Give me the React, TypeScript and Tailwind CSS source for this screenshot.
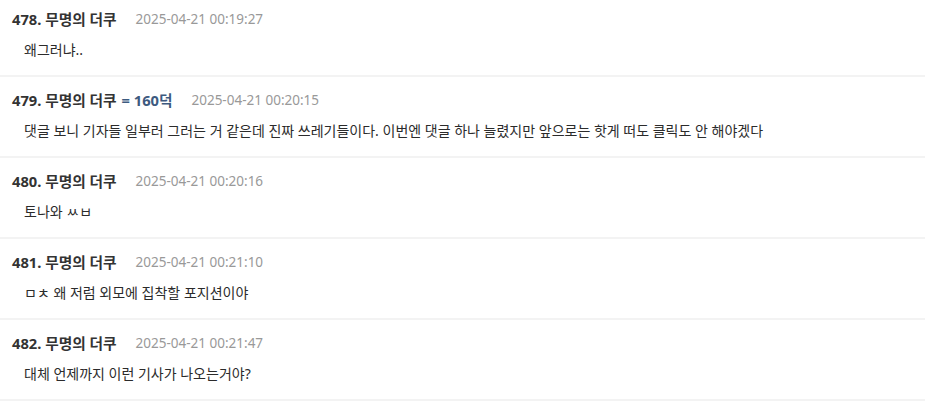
const comments = [
  { no: 478, time: "2025-04-21 00:19:27", body: "왜그러냐.." },
  {
    no: 479,
    time: "2025-04-21 00:20:15",
    body: "댓글 보니 기자들 일부러 그러는 거 같은데 진짜 쓰레기들이다. 이번엔 댓글 하나 늘렸지만 앞으로는 핫게 떠도 클릭도 안 해야겠다",
    ref: "= 160덕",
  },
  { no: 480, time: "2025-04-21 00:20:16", body: "토나와 ㅆㅂ" },
  { no: 481, time: "2025-04-21 00:21:10", body: "ㅁㅊ 왜 저럼 외모에 집착할 포지션이야" },
  { no: 482, time: "2025-04-21 00:21:47", body: "대체 언제까지 이런 기사가 나오는거야?" },
];

export default function App() {
  return (
    <div
      className="w-[925px] h-[407px] overflow-hidden bg-white text-[#2b2b2b]"
      style={{ fontFamily: '"Noto Sans", "Noto Sans CJK KR", sans-serif' }}
    >
      <ul>
        {comments.map((c, i) => (
          <li
            key={c.no}
            className={`border-b-2 border-[#f3f3f3] pb-[15px] ${i === 0 ? "pt-[9px]" : "pt-[13px]"}`}
          >
            <div className="flex items-center pl-3 h-5">
              <span className="text-[14.7px] font-bold text-[#333]">
                {c.no}. 무명의 더쿠
                {c.ref && <span className="text-[#3d5a80] ml-[5px]">{c.ref}</span>}
              </span>
              <span className="ml-[19px] text-[13.5px] text-[#999]">{c.time}</span>
            </div>
            <p className="pl-6 mt-[11px] h-5 leading-5 text-[14px]">{c.body}</p>
          </li>
        ))}
      </ul>
    </div>
  );
}
